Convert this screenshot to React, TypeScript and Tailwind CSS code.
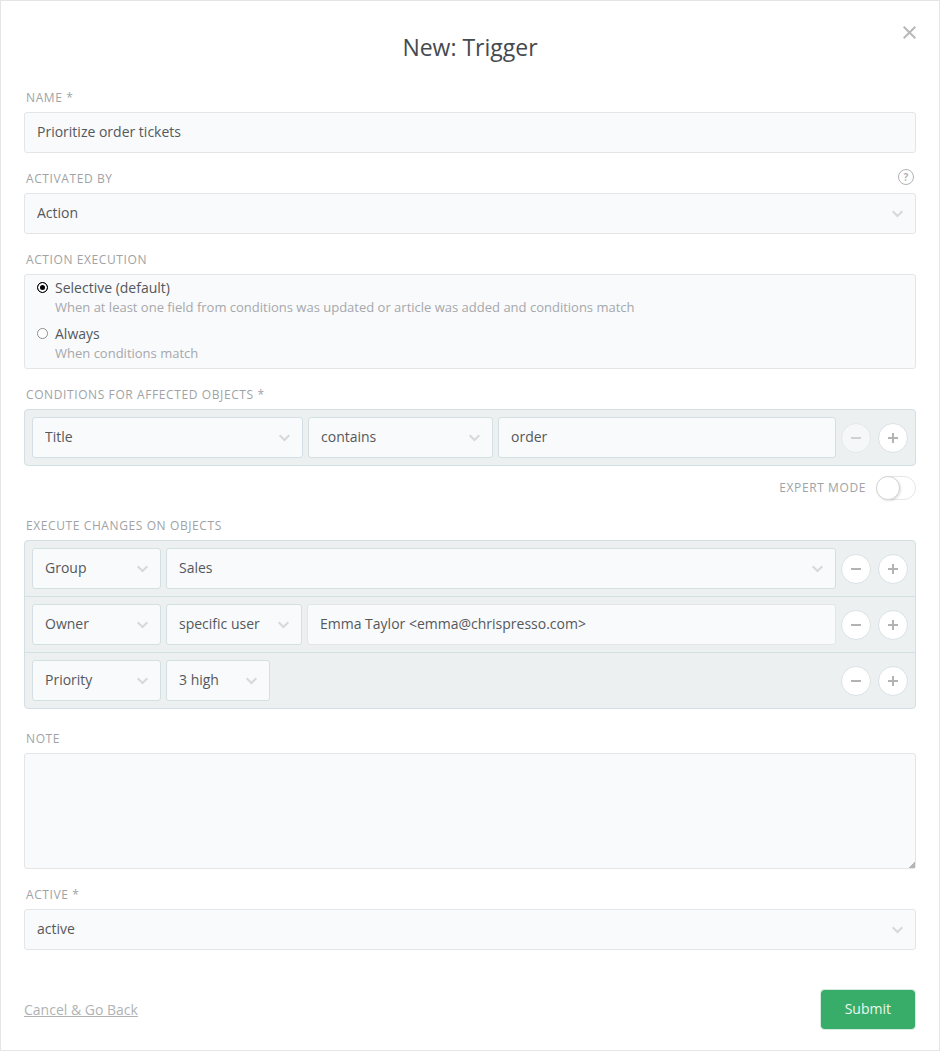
import React, { useState } from 'react';
import clsx from 'clsx';

const LABEL = 'block px-[2px] text-xs leading-5 tracking-wider uppercase text-[#a0a3a6]';
const CONTROL =
  'w-full h-[41px] px-3 pb-[2px] text-sm text-[#54585b] bg-[#f9fafc] border rounded-[3px] outline-none';
const PLAIN_BORDER = 'border-[#e4e5e7]';
const FILTER_BORDER = 'border-[#d3dfe3]';

interface SelectProps {
  id?: string;
  label?: string;
  options: string[];
  inFilter?: boolean;
  className?: string;
}

const Select: React.FC<SelectProps> = ({ id, label, options, inFilter, className }) => (
  <div className={clsx('relative', className)}>
    <select
      id={id}
      aria-label={label}
      className={clsx(CONTROL, 'appearance-none', inFilter ? FILTER_BORDER : PLAIN_BORDER)}
    >
      {options.map((option) => (
        <option key={option}>{option}</option>
      ))}
    </select>
    <svg
      className="pointer-events-none absolute right-3 top-[17px]"
      width="13"
      height="8"
      viewBox="0 0 13 8"
      fill="none"
      stroke="#d6d8da"
      strokeWidth="2"
    >
      <path d="M1.7 1.2 6.5 6l4.8-4.8" />
    </svg>
  </div>
);

interface RoundButtonProps {
  kind: 'add' | 'remove';
  disabled?: boolean;
}

const RoundButton: React.FC<RoundButtonProps> = ({ kind, disabled }) => (
  <button
    type="button"
    aria-label={kind === 'add' ? 'Add row' : 'Remove row'}
    disabled={disabled}
    className="flex size-[30px] items-center justify-center rounded-full border border-[#d9e2e5] bg-white disabled:opacity-50"
  >
    <svg width="10" height="10" viewBox="0 0 10 10" fill="#b3b3b3">
      <path d={kind === 'add' ? 'M4 0h2v4h4v2H6v4H4V6H0V4h4z' : 'M0 4h10v2H0z'} />
    </svg>
  </button>
);

interface FilterRowProps {
  children: React.ReactNode;
  removeDisabled?: boolean;
}

const FilterRow: React.FC<FilterRowProps> = ({ children, removeDisabled }) => (
  <div className="flex items-center gap-[5px] p-[7px]">
    <div className="flex min-w-0 flex-1 gap-[5px]">{children}</div>
    <div className="flex gap-[7px]">
      <RoundButton kind="remove" disabled={removeDisabled} />
      <RoundButton kind="add" />
    </div>
  </div>
);

const FILTER_BOX =
  'mt-1 rounded-[4px] border border-[#d3dfe3] bg-[#ecf0f1] divide-y divide-[#d3dfe3]';

const executionModes = [
  {
    value: 'selective',
    title: 'Selective (default)',
    hint: 'When at least one field from conditions was updated or article was added and conditions match',
  },
  { value: 'always', title: 'Always', hint: 'When conditions match' },
];

export default function App() {
  const [mode, setMode] = useState('selective');
  const [expert, setExpert] = useState(false);

  return (
    <form
      onSubmit={(e) => e.preventDefault()}
      className="border border-[#e4e5e7] bg-white px-[23px] pb-5 font-['Open_Sans',sans-serif]"
    >
      <header className="relative pt-[30px] pb-[25px]">
        <h1 className="text-center text-[23px] leading-8 text-[#444a4f]">New: Trigger</h1>
        <button type="button" aria-label="Close" className="absolute right-0 top-[25px]">
          <svg width="13" height="13" viewBox="0 0 13 13" stroke="#b6b8ba" strokeWidth="2">
            <path d="M.7.7l11.6 11.6M12.3.7.7 12.3" />
          </svg>
        </button>
      </header>

      <div className="flex flex-col gap-4">
        <div>
          <label htmlFor="name" className={LABEL}>Name *</label>
          <input
            id="name"
            type="text"
            defaultValue="Prioritize order tickets"
            className={clsx(CONTROL, PLAIN_BORDER, 'mt-1 block')}
          />
        </div>

        <div>
          <div className="flex justify-between pr-[2px]">
            <label htmlFor="activator" className={LABEL}>Activated by</label>
            <button
              type="button"
              aria-label="Help"
              className="flex size-4 items-center justify-center rounded-full border border-[#b3b3b3] text-[10px] leading-none font-bold text-[#b3b3b3]"
            >
              ?
            </button>
          </div>
          <Select id="activator" options={['Action', 'Time event']} className="mt-1" />
        </div>

        <fieldset>
          <legend className={LABEL}>Action execution</legend>
          <div
            className={clsx(
              'mt-1 flex flex-col gap-2 rounded-[3px] border bg-[#f9fafc] px-3 pt-[3px] pb-[6px]',
              PLAIN_BORDER,
            )}
          >
            {executionModes.map(({ value, title, hint }) => (
              <label key={value} className="flex gap-[7px]">
                <input
                  type="radio"
                  name="execution"
                  value={value}
                  checked={mode === value}
                  onChange={() => setMode(value)}
                  className="mt-1 size-[11px] shrink-0 appearance-none rounded-full border border-[#8f8f8f] bg-white checked:border-black checked:bg-black checked:shadow-[inset_0_0_0_2px_white]"
                />
                <span>
                  <span className="block text-sm leading-5 text-[#54585b]">{title}</span>
                  <span className="block text-[13px] leading-[18px] text-[#a5a8ab]">{hint}</span>
                </span>
              </label>
            ))}
          </div>
        </fieldset>

        <div>
          <div role="group" aria-labelledby="conditions">
            <span id="conditions" className={LABEL}>Conditions for affected objects *</span>
            <div className={FILTER_BOX}>
              <FilterRow removeDisabled>
                <Select inFilter label="Attribute" options={['Title', 'State']} className="w-[271px]" />
                <Select inFilter label="Operator" options={['contains', 'is']} className="w-[185px]" />
                <input
                  type="text"
                  aria-label="Value"
                  defaultValue="order"
                  className={clsx(CONTROL, FILTER_BORDER, 'min-w-0 flex-1')}
                />
              </FilterRow>
            </div>
          </div>
          <label className="mt-[10px] flex items-center justify-end gap-2">
            <span className={LABEL}>Expert mode</span>
            <input
              type="checkbox"
              role="switch"
              checked={expert}
              onChange={(e) => setExpert(e.target.checked)}
              className="h-6 w-10 appearance-none rounded-full border border-[#e6e6e6] bg-white before:-m-px before:block before:size-6 before:rounded-full before:border before:border-[#d4d4d4] before:bg-white before:shadow-[1px_1px_2px_#0000001f] checked:bg-[#38ad69] checked:before:ml-[15px]"
            />
          </label>
        </div>

        <div role="group" aria-labelledby="changes">
          <span id="changes" className={LABEL}>Execute changes on objects</span>
          <div className={FILTER_BOX}>
            <FilterRow>
              <Select inFilter label="Attribute" options={['Group']} className="w-[129px]" />
              <Select inFilter label="Group" options={['Sales', 'Support']} className="flex-1" />
            </FilterRow>
            <FilterRow>
              <Select inFilter label="Attribute" options={['Owner']} className="w-[129px]" />
              <Select inFilter label="Owner type" options={['specific user']} className="w-[136px]" />
              <input
                type="text"
                aria-label="Owner"
                defaultValue="Emma Taylor <emma@chrispresso.com>"
                className={clsx(CONTROL, PLAIN_BORDER, 'min-w-0 flex-1')}
              />
            </FilterRow>
            <FilterRow>
              <Select inFilter label="Attribute" options={['Priority']} className="w-[129px]" />
              <Select inFilter label="Priority" options={['3 high', '2 normal', '1 low']} className="w-[104px]" />
            </FilterRow>
          </div>
        </div>

        <div className="mt-1">
          <label htmlFor="note" className={LABEL}>Note</label>
          <textarea
            id="note"
            className={clsx(
              'mt-1 block h-[116px] w-full resize-y rounded-[3px] border bg-[#f9fafc] px-3 py-2 text-sm text-[#54585b] outline-none',
              '[&::-webkit-resizer]:bg-[linear-gradient(135deg,transparent_80%,#b3b6b8_80%)]',
              PLAIN_BORDER,
            )}
          />
        </div>

        <div>
          <label htmlFor="active" className={LABEL}>Active *</label>
          <Select id="active" options={['active', 'inactive']} className="mt-1" />
        </div>
      </div>

      <footer className="mt-[39px] flex items-center justify-between">
        <a href="#triggers" className="text-sm text-[#b0b3b5] underline">
          Cancel &amp; Go Back
        </a>
        <button
          type="submit"
          className="h-[41px] rounded-[4px] border border-[#d5ebdf] bg-[#38ad69] bg-clip-padding px-6 pb-[2px] text-sm text-[#e9f7ef]"
        >
          Submit
        </button>
      </footer>
    </form>
  );
}
